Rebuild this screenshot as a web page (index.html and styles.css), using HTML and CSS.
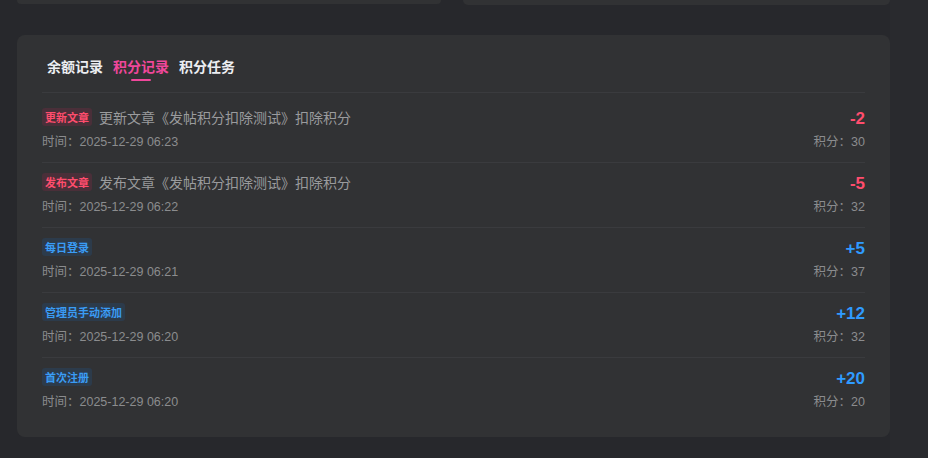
FILE: index.html
```html
<!DOCTYPE html>
<html lang="zh-CN">
<head>
<meta charset="utf-8">
<title>积分记录</title>
<link rel="stylesheet" href="styles.css">
</head>
<body>
<div class="page">
  <main class="main">
    <div class="top-row">
      <div class="top-card top-card-left"></div>
      <div class="top-card top-card-right"></div>
    </div>
    <section class="card">
      <nav class="tabs">
        <span class="tab">余额记录</span>
        <span class="tab active">积分记录</span>
        <span class="tab">积分任务</span>
      </nav>
      <ul class="list">
        <li class="row">
          <div class="info">
            <div class="title-line"><span class="tag tag-red">更新文章</span><span class="title">更新文章《发帖积分扣除测试》扣除积分</span></div>
            <div class="time">时间：2025-12-29 06:23</div>
          </div>
          <div class="side">
            <div class="amount neg">-2</div>
            <div class="points">积分：30</div>
          </div>
        </li>
        <li class="row">
          <div class="info">
            <div class="title-line"><span class="tag tag-red">发布文章</span><span class="title">发布文章《发帖积分扣除测试》扣除积分</span></div>
            <div class="time">时间：2025-12-29 06:22</div>
          </div>
          <div class="side">
            <div class="amount neg">-5</div>
            <div class="points">积分：32</div>
          </div>
        </li>
        <li class="row">
          <div class="info">
            <div class="title-line"><span class="tag tag-blue">每日登录</span></div>
            <div class="time">时间：2025-12-29 06:21</div>
          </div>
          <div class="side">
            <div class="amount pos">+5</div>
            <div class="points">积分：37</div>
          </div>
        </li>
        <li class="row">
          <div class="info">
            <div class="title-line"><span class="tag tag-blue">管理员手动添加</span></div>
            <div class="time">时间：2025-12-29 06:20</div>
          </div>
          <div class="side">
            <div class="amount pos">+12</div>
            <div class="points">积分：32</div>
          </div>
        </li>
        <li class="row">
          <div class="info">
            <div class="title-line"><span class="tag tag-blue">首次注册</span></div>
            <div class="time">时间：2025-12-29 06:20</div>
          </div>
          <div class="side">
            <div class="amount pos">+20</div>
            <div class="points">积分：20</div>
          </div>
        </li>
      </ul>
    </section>
  </main>
  <aside class="strip"></aside>
</div>
</body>
</html>
```

FILE: styles.css
```css
* { box-sizing: border-box; }
html, body { margin: 0; padding: 0; }
body {
  background: #27282c;
  font-family: "Liberation Sans", "Noto Sans CJK SC", sans-serif;
  color: #e5e7eb;
  height: 458px;
  overflow: hidden;
}
.page {
  display: flex;
  height: 458px;
}
.main {
  width: 890px;
  padding-left: 17px;
}
.strip {
  flex: 1;
  background: #292a2e;
}
.top-row {
  display: grid;
  grid-template-columns: 424px 427px;
  column-gap: 22px;
  align-items: start;
}
.top-card {
  background: #313234;
  border-radius: 0 0 8px 8px;
}
.top-card-left { height: 4px; }
.top-card-right { height: 5px; }
.card {
  margin-top: 30px;
  background: #313234;
  border-radius: 8px;
  padding: 19px 25px 15px;
}
.tabs {
  display: flex;
  padding-bottom: 14px;
  border-bottom: 1px solid #3a3b3e;
}
.tab {
  position: relative;
  padding: 0 5px;
  font-family: "Noto Sans CJK SC", sans-serif;
  font-size: 14px;
  font-weight: 700;
  line-height: 24px;
  color: #eceef2;
}
.tab.active { color: #f0479b; }
.tab.active::after {
  content: "";
  position: absolute;
  left: 50%;
  bottom: -3px;
  width: 20px;
  height: 2px;
  margin-left: -10px;
  border-radius: 1px;
  background: #f0479b;
}
.list {
  list-style: none;
  margin: 0;
  padding: 5px 0 0;
}
.row {
  display: flex;
  justify-content: space-between;
  align-items: flex-start;
  padding: 10px 0 11px;
}
.row + .row { border-top: 1px solid #3a3b3e; }
.title-line {
  display: flex;
  align-items: center;
  height: 18px;
  margin-bottom: 7px;
}
.tag {
  display: inline-block;
  height: 18px;
  line-height: 18px;
  padding: 0 3px;
  border-radius: 3px;
  font-family: "Noto Sans CJK SC", sans-serif;
  font-size: 11px;
  font-weight: 700;
}
.tag-red { color: #ff4d6d; background: #4a2f39; }
.tag-blue { color: #3a9cf5; background: #2c3b4b; }
.title {
  margin-left: 7px;
  font-family: "Noto Sans CJK SC", sans-serif;
  font-size: 14px;
  color: #9a9b9d;
  line-height: 18px;
}
.time, .points {
  font-size: 12.5px;
  line-height: 18px;
  color: #8b8c8e;
}
.side { text-align: right; }
.amount {
  font-size: 17px;
  font-weight: 700;
  line-height: 22px;
  margin-bottom: 3px;
}
.amount.neg { color: #ff4d6d; }
.amount.pos { color: #2f9bff; }
```
